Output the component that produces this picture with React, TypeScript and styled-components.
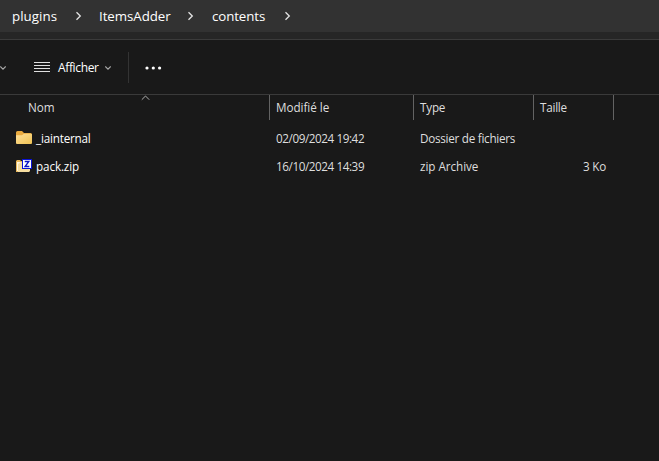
import React from "react";
import styled, { createGlobalStyle } from "styled-components";

const GlobalStyle = createGlobalStyle`
  *, *::before, *::after { box-sizing: border-box; }
  body { margin: 0; background: #191919; overflow: hidden; }
`;

const Explorer = styled.main`
  width: 659px;
  height: 461px;
  display: flex;
  flex-direction: column;
  background: #191919;
  color: #fff;
  font: 12px/16px "Open Sans", "Noto Sans", sans-serif;
  white-space: nowrap;
  svg { display: block; flex: none; }
`;

const AddressBar = styled.nav`
  height: 32px;
  display: flex;
  background: #323232;
`;

const Crumb = styled.div<{ $width: number }>`
  width: ${(p) => p.$width}px;
  flex: none;
  display: flex;
  align-items: center;
  justify-content: space-between;
`;

const Label = styled.span<{ $spacing?: number }>`
  font-size: 11.7px;
  letter-spacing: ${(p) => p.$spacing ?? 0}px;
`;

const CrumbLabel = styled(Label)<{ $inset?: number }>`
  padding-left: ${(p) => p.$inset ?? 17}px;
  padding-bottom: 1px;
  font-size: 13.3px;
`;

const AddressEdge = styled.div`
  height: 8px;
  background: #262626;
  border-bottom: 1px solid #3b3b3b;
`;

const Toolbar = styled.div`
  height: 55px;
  padding-top: 1px;
  display: flex;
  align-items: center;
  border-bottom: 1px solid #3a3a3a;
`;

const ViewButton = styled.div`
  width: 94px;
  margin-left: 28px;
  display: flex;
  align-items: center;
`;

const ViewLabel = styled(Label)`
  width: 47px;
  margin-left: 8px;
  padding-top: 1px;
  font-size: 12px;
`;

const Separator = styled.div`
  width: 1px;
  height: 31px;
  margin: 0 16px 0 0;
  background: #333;
`;

const columns = "270px 144px 120px 80px";

const HeaderRow = styled.div`
  position: relative;
  height: 30px;
  display: grid;
  grid-template-columns: ${columns};
`;

const HeaderCell = styled.div<{ $inset?: number }>`
  height: 25px;
  padding: 4px 0 0 ${(p) => p.$inset ?? 6}px;
  border-right: 1px solid #636363;
  color: #dedede;
`;

const SortMark = styled.svg`
  position: absolute;
  left: 141px;
  top: 0;
`;

const FileRow = styled.div`
  height: 28px;
  display: grid;
  grid-template-columns: ${columns};
  align-items: center;
  color: #dedede;
`;

const NameCell = styled.div`
  padding-left: 16px;
  display: flex;
  align-items: center;
  gap: 4px;
  color: #fff;
`;

const FileName = styled(Label)`
  padding-bottom: 2px;
`;

const Cell = styled.div<{ $right?: boolean }>`
  padding: 0 ${(p) => (p.$right ? 8 : 0)}px 2px 6px;
  text-align: ${(p) => (p.$right ? "right" : "left")};
`;

const RightChevron = () => (
  <svg width="6" height="10" viewBox="0 0 6 10" fill="none" stroke="#e4e4e4" strokeWidth="1.3">
    <path d="M.5 1.2 4.3 5 .5 8.8" />
  </svg>
);

const DownChevron = () => (
  <svg width="6" height="4" viewBox="0 0 6 4" fill="none" stroke="#a8a8a8" strokeWidth="1.1">
    <path d="M.3.5 3 3.2 5.7.5" />
  </svg>
);

const FolderIcon = () => (
  <svg width="16" height="16" viewBox="0 0 16 16">
    <defs>
      <linearGradient id="folder" x1="0" y1="0" x2="1" y2="1">
        <stop stopColor="#ffdf98" />
        <stop offset="1" stopColor="#efc354" />
      </linearGradient>
    </defs>
    <path d="M0 1.5Q0 0 1.5 0H6L8 2H14.5Q16 2 16 4V7H0Z" fill="#e9aa3f" />
    <path d="M0 4.3H6L8 2.8H15Q16 2.8 16 4V12Q16 13 15 13H1Q0 13 0 12Z" fill="url(#folder)" />
  </svg>
);

const ArchiveIcon = () => (
  <svg width="16" height="16" viewBox="0 0 16 16">
    <path d="M0 2 1 1H4L5 2H13V13H0Z" fill="#e9b85a" />
    <path d="M1 3H5V5H2V12H1Z" fill="#fff7df" />
    <path d="M2 5 5 3H14V12L13 13H2Z" fill="#f6dda0" />
    <path d="M6 0H16V10H6Z" fill="#0a13d5" />
    <path d="M7 1H15V9H7Z" fill="#fff" />
    <path d="M8.7 2.6H12.7L9.2 7.4H13.3" fill="none" stroke="#0a13c5" strokeWidth="1.5" />
  </svg>
);

export default function App() {
  return (
    <>
      <GlobalStyle />
      <Explorer>
        <AddressBar>
          <Crumb $width={82}>
            <CrumbLabel $inset={12} $spacing={0.05}>plugins</CrumbLabel>
            <RightChevron />
          </Crumb>
          <Crumb $width={112}>
            <CrumbLabel $spacing={-0.05}>ItemsAdder</CrumbLabel>
            <RightChevron />
          </Crumb>
          <Crumb $width={97}>
            <CrumbLabel $inset={18} $spacing={-0.1}>contents</CrumbLabel>
            <RightChevron />
          </Crumb>
        </AddressBar>
        <AddressEdge />
        <Toolbar>
          <DownChevron />
          <ViewButton>
            <svg width="16" height="12" viewBox="0 0 16 12" fill="none" stroke="#e0e0e0">
              <path d="M0 .5H16M0 3.5H16M0 6.5H16M0 9.5H16" />
            </svg>
            <ViewLabel $spacing={-0.35}>Afficher</ViewLabel>
            <DownChevron />
          </ViewButton>
          <Separator />
          <svg width="17" height="4" viewBox="0 0 17 4" fill="#fff">
            <circle cx="2" cy="2" r="1.6" />
            <circle cx="8.3" cy="2" r="1.6" />
            <circle cx="14.6" cy="2" r="1.6" />
          </svg>
        </Toolbar>
        <HeaderRow>
          <HeaderCell $inset={28}><Label>Nom</Label></HeaderCell>
          <HeaderCell><Label $spacing={-0.05}>Modifié le</Label></HeaderCell>
          <HeaderCell><Label $spacing={-0.2}>Type</Label></HeaderCell>
          <HeaderCell><Label $spacing={-0.25}>Taille</Label></HeaderCell>
          <SortMark width="9" height="6" viewBox="0 0 9 6" fill="none" stroke="#b0b0b0">
            <path d="M.8 4.7 4.5 1 8.2 4.7" />
          </SortMark>
        </HeaderRow>
        <FileRow>
          <NameCell><FolderIcon /><FileName $spacing={-0.2}>_iainternal</FileName></NameCell>
          <Cell><Label $spacing={-0.42}>02/09/2024 19:42</Label></Cell>
          <Cell><Label $spacing={-0.27}>Dossier de fichiers</Label></Cell>
          <Cell />
        </FileRow>
        <FileRow>
          <NameCell><ArchiveIcon /><FileName $spacing={-0.12}>pack.zip</FileName></NameCell>
          <Cell><Label $spacing={-0.42}>16/10/2024 14:39</Label></Cell>
          <Cell><Label $spacing={-0.05}>zip Archive</Label></Cell>
          <Cell $right><Label $spacing={-0.2}>3 Ko</Label></Cell>
        </FileRow>
      </Explorer>
    </>
  );
}
